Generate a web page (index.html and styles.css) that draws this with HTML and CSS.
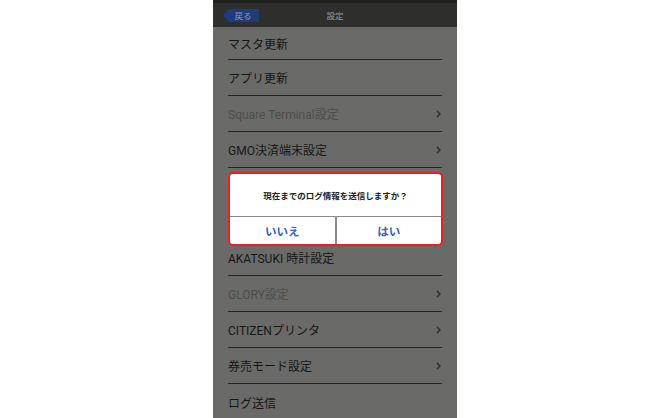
FILE: index.html
```html
<!DOCTYPE html>
<html lang="ja">
<head>
<meta charset="utf-8">
<link rel="stylesheet" href="styles.css">
</head>
<body>
<div class="page">
  <div class="phone">
    <div class="statusbar"></div>
    <div class="header">
      <div class="back">
        <svg class="back-shape" width="36" height="13" viewBox="0 0 36 13"><path d="M0 6.5 L6 0 H36 V13 H6 Z" fill="#1f3b7a"/></svg>
        <span class="back-label">戻る</span>
      </div>
      <div class="title">設定</div>
    </div>
    <div class="list">
      <div class="row first"><span class="label">マスタ更新</span></div>
      <div class="row"><span class="label">アプリ更新</span></div>
      <div class="row disabled"><span class="label">Square Terminal設定</span><svg class="chev" width="5" height="8" viewBox="0 0 5 8"><path d="M1 1 L4 4 L1 7" fill="none" stroke="#2c2d2b" stroke-width="1.3"/></svg></div>
      <div class="row"><span class="label">GMO決済端末設定</span><svg class="chev" width="5" height="8" viewBox="0 0 5 8"><path d="M1 1 L4 4 L1 7" fill="none" stroke="#2c2d2b" stroke-width="1.3"/></svg></div>
      <div class="row"></div>
      <div class="row"></div>
      <div class="row"><span class="label">AKATSUKI 時計設定</span></div>
      <div class="row disabled"><span class="label">GLORY設定</span><svg class="chev" width="5" height="8" viewBox="0 0 5 8"><path d="M1 1 L4 4 L1 7" fill="none" stroke="#2c2d2b" stroke-width="1.3"/></svg></div>
      <div class="row"><span class="label">CITIZENプリンタ</span><svg class="chev" width="5" height="8" viewBox="0 0 5 8"><path d="M1 1 L4 4 L1 7" fill="none" stroke="#2c2d2b" stroke-width="1.3"/></svg></div>
      <div class="row"><span class="label">券売モード設定</span><svg class="chev" width="5" height="8" viewBox="0 0 5 8"><path d="M1 1 L4 4 L1 7" fill="none" stroke="#2c2d2b" stroke-width="1.3"/></svg></div>
      <div class="row last"><span class="label">ログ送信</span></div>
    </div>
    <div class="dialog">
      <div class="message">現在までのログ情報を送信しますか？</div>
      <div class="buttons">
        <div class="btn">いいえ</div>
        <div class="btn">はい</div>
      </div>
    </div>
  </div>
</div>
</body>
</html>
```
FILE: styles.css
```css
* { box-sizing: border-box; }
html, body { margin: 0; padding: 0; background: #ffffff; }
body {
  font-family: Roboto, "Noto Sans CJK JP", sans-serif;
  width: 670px;
  height: 418px;
  overflow: hidden;
}
.page {
  display: flex;
  justify-content: center;
  height: 418px;
}
.phone {
  position: relative;
  width: 244px;
  height: 418px;
  background: #6a6b68;
  display: flex;
  flex-direction: column;
  overflow: hidden;
}
.statusbar {
  height: 3px;
  background: #1f201e;
  flex: none;
}
.header {
  height: 24px;
  background: #2e2f2d;
  flex: none;
  display: flex;
  align-items: center;
  position: relative;
  padding-left: 10px;
}
.back {
  position: relative;
  width: 36px;
  height: 13px;
  display: flex;
  align-items: center;
  justify-content: center;
}
.back-shape { position: absolute; left: 0; top: 0; }
.back-label {
  position: relative;
  font-size: 8.5px;
  color: #8e9bb8;
  padding-left: 4px;
}
.title {
  position: absolute;
  left: 0;
  right: 0;
  text-align: center;
  font-size: 8.5px;
  color: #9a9b98;
  pointer-events: none;
}
.list {
  display: flex;
  flex-direction: column;
  padding: 0 15px 0 15px;
}
.row {
  height: 36px;
  flex: none;
  display: flex;
  align-items: center;
  justify-content: space-between;
  border-bottom: 1px solid #262725;
  font-size: 12px;
  color: #161616;
}
.row.first { height: 33px; }
.row.last { border-bottom: none; }
.row.disabled { color: #4d4e4b; }
.chev {
  flex: none;
  margin-right: 1px;
}
.dialog {
  position: absolute;
  left: 15px;
  top: 172px;
  width: 215px;
  height: 74px;
  background: #ffffff;
  border: 2px solid #ee1c24;
  border-radius: 5px;
  display: flex;
  flex-direction: column;
  overflow: hidden;
}
.message {
  height: 43px;
  display: flex;
  align-items: center;
  justify-content: center;
  font-size: 8.5px;
  font-weight: bold;
  color: #222;
  border-bottom: 1px solid #8a8a8a;
}
.buttons {
  flex: 1;
  display: flex;
}
.btn {
  flex: 1;
  display: flex;
  align-items: center;
  justify-content: center;
  font-size: 11.5px;
  font-weight: bold;
  color: #2f5fd3;
}
.btn + .btn { border-left: 2px solid #8a8a8a; }
```
